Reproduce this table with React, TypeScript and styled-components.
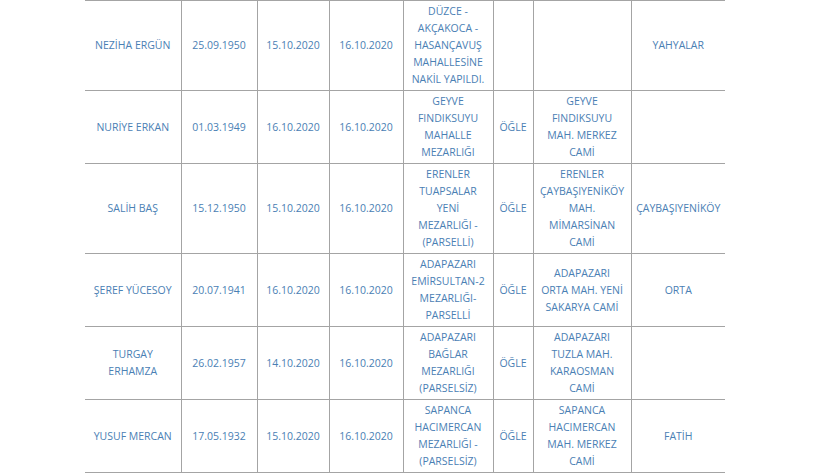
import React from "react";
import styled, { createGlobalStyle } from "styled-components";

//-----------Styled Components------------------

const GlobalStyle = createGlobalStyle`
  html, body {
    margin: 0;
    padding: 0;
    background: #ffffff;
  }
`;

const Page = styled.div`
  width: 820px;
  height: 475px;
  overflow: hidden;
  background: #ffffff;
  padding-left: 85px;
  box-sizing: border-box;
`;

const Table = styled.table`
  border-collapse: collapse;
  table-layout: fixed;
  width: 640px;
  border-top: 1px solid #a4a4a4;
  font-family: "Open Sans", Lato, sans-serif;
  font-size: 10.5px;
  color: #4a80b4;
`;

const Row = styled.tr`
  border-bottom: 1px solid #a4a4a4;
`;

const Cell = styled.td`
  padding: 2px 1px;
  line-height: 17px;
  text-align: center;
  vertical-align: middle;
  white-space: nowrap;
  border-left: 1px solid #a4a4a4;
  text-transform: uppercase !important;

  &:first-child {
    border-left: none;
  }
`;

const Line = styled.span`
  display: block;
  text-transform: uppercase !important;
`;

//==============================================

const widths = [96, 76, 72, 74, 90, 40, 98, 94];

type Record = string[][];

const data: Record[] = [
  [
    ["NEZİHA ERGÜN"],
    ["25.09.1950"],
    ["15.10.2020"],
    ["16.10.2020"],
    ["DÜZCE -", "AKÇAKOCA -", "HASANÇAVUŞ", "MAHALLESİNE", "NAKİL YAPILDI."],
    [],
    [],
    ["YAHYALAR"],
  ],
  [
    ["NURİYE ERKAN"],
    ["01.03.1949"],
    ["16.10.2020"],
    ["16.10.2020"],
    ["GEYVE", "FINDIKSUYU", "MAHALLE", "MEZARLIĞI"],
    ["ÖĞLE"],
    ["GEYVE", "FINDIKSUYU", "MAH. MERKEZ", "CAMİ"],
    [],
  ],
  [
    ["SALİH BAŞ"],
    ["15.12.1950"],
    ["15.10.2020"],
    ["16.10.2020"],
    ["ERENLER", "TUAPSALAR", "YENİ", "MEZARLIĞI -", "(PARSELLİ)"],
    ["ÖĞLE"],
    ["ERENLER", "ÇAYBAŞIYENİKÖY", "MAH.", "MİMARSİNAN", "CAMİ"],
    ["ÇAYBAŞIYENİKÖY"],
  ],
  [
    ["ŞEREF YÜCESOY"],
    ["20.07.1941"],
    ["16.10.2020"],
    ["16.10.2020"],
    ["ADAPAZARI", "EMİRSULTAN-2", "MEZARLIĞI-", "PARSELLİ"],
    ["ÖĞLE"],
    ["ADAPAZARI", "ORTA MAH. YENİ", "SAKARYA CAMİ"],
    ["ORTA"],
  ],
  [
    ["TURGAY", "ERHAMZA"],
    ["26.02.1957"],
    ["14.10.2020"],
    ["16.10.2020"],
    ["ADAPAZARI", "BAĞLAR", "MEZARLIĞI", "(PARSELSİZ)"],
    ["ÖĞLE"],
    ["ADAPAZARI", "TUZLA MAH.", "KARAOSMAN", "CAMİ"],
    [],
  ],
  [
    ["YUSUF MERCAN"],
    ["17.05.1932"],
    ["15.10.2020"],
    ["16.10.2020"],
    ["SAPANCA", "HACIMERCAN", "MEZARLIĞI -", "(PARSELSİZ)"],
    ["ÖĞLE"],
    ["SAPANCA", "HACIMERCAN", "MAH. MERKEZ", "CAMİ"],
    ["FATİH"],
  ],
];

function App() {
  return (
    <Page>
      <GlobalStyle />
      <Table lang="tr">
        <colgroup>
          {widths.map((w, i) => (
            <col key={i} style={{ width: w }} />
          ))}
        </colgroup>
        <tbody>
          {data.map((row, r) => (
            <Row key={r}>
              {row.map((lines, c) => (
                <Cell key={c}>
                  {lines.map((line, l) => (
                    <Line key={l}>{line}</Line>
                  ))}
                </Cell>
              ))}
            </Row>
          ))}
        </tbody>
      </Table>
    </Page>
  );
}

export default App;
